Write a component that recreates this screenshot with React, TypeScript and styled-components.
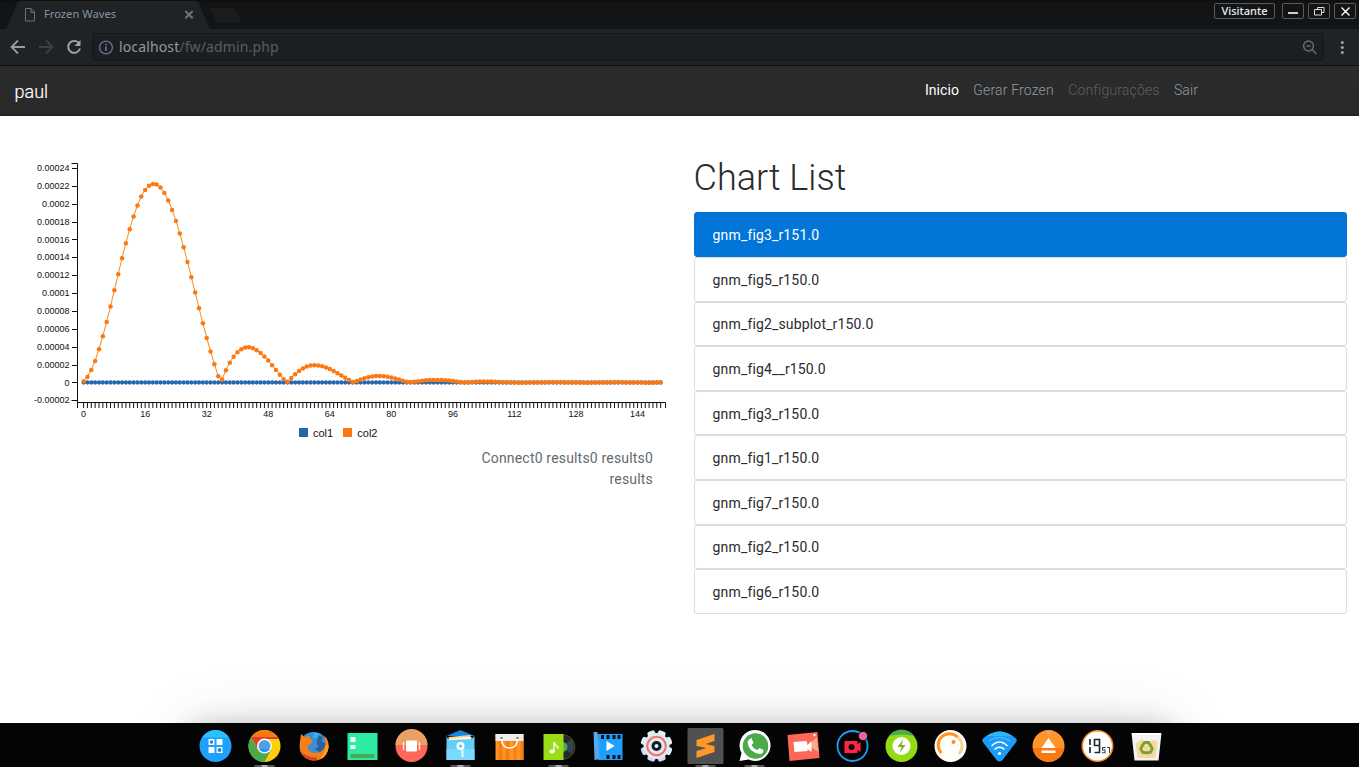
import React from 'react';
import styled, { createGlobalStyle } from 'styled-components';

const Global = createGlobalStyle`
  * { box-sizing: border-box; }
  body { margin: 0; background: #fff; font-family: Roboto, sans-serif; }
`;

const Screen = styled.div`
  width: 1359px;
  height: 767px;
  display: flex;
  flex-direction: column;
  overflow: hidden;
`;

/* ---------- browser chrome ---------- */
const TabStrip = styled.div`
  height: 29px;
  flex: none;
  display: flex;
  justify-content: space-between;
  background: linear-gradient(#0d0e0f 0, #131415 3px, #131416 100%);
`;
const Tabs = styled.div`
  display: flex;
  position: relative;
`;
const TabShape = styled.svg`
  position: absolute;
  left: 0;
  top: 0;
`;
const TabLabel = styled.div`
  position: relative;
  display: flex;
  align-items: center;
  height: 28px;
  padding-left: 24px;
  font: 11px/14px 'Noto Sans', sans-serif;
  color: #8393a4;
`;
const TabTitle = styled.span`
  width: 140px;
  margin-left: 8px;
  font-size: 11.2px;
`;
const WindowControls = styled.div`
  display: flex;
  gap: 4px;
  padding: 3px 3px 0 0;
`;
const ControlButton = styled.div<{ $wide?: boolean }>`
  display: flex;
  align-items: center;
  justify-content: center;
  width: ${p => (p.$wide ? 61 : 22)}px;
  margin-right: ${p => (p.$wide ? 3 : 0)}px;
  height: 16px;
  border: 1px solid #5a5b5c;
  border-radius: 2px;
  color: #eee;
  font: 500 11px/14px 'Noto Sans', sans-serif;
`;
const Toolbar = styled.div`
  height: 37px;
  flex: none;
  display: flex;
  align-items: center;
  background: #202325;
  border-bottom: 1px solid #101112;
  padding-left: 10px;
`;
const NavIcons = styled.div`
  display: flex;
  gap: 12px;
  width: 82px;
`;
const Address = styled.div`
  width: 1232px;
  height: 28px;
  display: flex;
  align-items: center;
  padding: 0 6px;
  background: #1b1f21;
  border: 1px solid #141618;
  border-radius: 3px;
`;
const Url = styled.div`
  flex: 1;
  margin-left: 5px;
  font: 14px/20px 'Noto Sans', sans-serif;
  letter-spacing: 0.13px;
  color: #5c5d61;
  b { font-weight: 400; color: #93989d; }
`;
const MenuDots = styled.svg`
  margin-left: 10px;
`;

/* ---------- page ---------- */
const Navbar = styled.nav`
  height: 50px;
  flex: none;
  display: flex;
  background: linear-gradient(#2b2b2c, #2a2a2b 46px, #252122 50px);
  padding-left: 14.6px;
`;
const Brand = styled.div`
  width: 910.4px;
  font-size: 18px;
  line-height: 51px;
  color: #fff;
  font-weight: 300;
  -webkit-text-stroke: 0.2px #fff;
`;
const NavLinks = styled.div`
  display: flex;
  gap: 14.3px;
  font-size: 14px;
  line-height: 48px;
`;
const NavLink = styled.span<{ $color: string; $strong?: boolean }>`
  color: ${p => p.$color};
  font-weight: ${p => (p.$strong ? 400 : 300)};
  letter-spacing: ${p => (p.$strong ? 0.05 : 0.17)}px;
`;
const Content = styled.main`
  position: relative;
  flex: 1;
  display: flex;
  background: #fff;
  overflow: hidden;
`;
const DockShadow = styled.div`
  position: absolute;
  left: 190px;
  right: 187px;
  top: 613px;
  height: 60px;
  border-radius: 8px;
  box-shadow: 0 0 28px rgba(0, 0, 0, 0.3), 0 0 70px rgba(0, 0, 0, 0.12);
`;
const ChartColumn = styled.section`
  width: 694px;
  display: flex;
  flex-direction: column;
`;
const Results = styled.p`
  margin: 2px 41px 0 0;
  align-self: flex-end;
  width: 190px;
  text-align: right;
  font-size: 14px;
  line-height: 21px;
  letter-spacing: 0.18px;
  color: #626a6f;
`;
const ListColumn = styled.section`
  width: 653px;
`;
const Title = styled.h1`
  margin: 40px 0 11.3px -0.5px;
  font-size: 36px;
  line-height: 45px;
  font-weight: 300;
  color: #292b2c;
`;
const List = styled.div`
  display: flex;
  flex-direction: column;
`;
const ListItem = styled.div<{ $active?: boolean }>`
  height: 44.63px;
  padding-left: 17.6px;
  border: 1px solid ${p => (p.$active ? '#0275d8' : '#dcdcdc')};
  border-radius: 3px;
  background: ${p => (p.$active ? '#0275d8' : '#fff')};
  color: ${p => (p.$active ? '#fff' : '#292b2c')};
  font-size: 14px;
  line-height: 44px;
  letter-spacing: 0.15px;
`;
const ItemLabel = styled.div`
  margin-top: -0.25px;
`;

/* ---------- dock ---------- */
const Dock = styled.div`
  height: 44px;
  flex: none;
  display: flex;
  padding-left: 190.5px;
  background: #040404;
`;
const DockIcon = styled.svg`
  width: 49.02px;
  height: 44px;
  flex: none;
`;

const ys = [
  381, 376.7, 369.7, 360.7, 349, 336, 321.7, 306.3, 290, 274, 258, 243, 229, 216.3, 205.3, 196.3, 189.7, 185.5,
  183.7, 184.4, 187.4, 192.7, 200.2, 209.7, 220.7, 233.3, 247, 261.7, 277, 292.4, 308, 323, 337.7, 351.4, 364,
  376, 379.3, 370, 362.5, 356.5, 352, 349, 347.4, 347, 348, 350, 352.8, 356.2, 360.3, 365, 369.7, 374.5, 379,
  381.5, 377.7, 374, 370.8, 368.2, 366.4, 365.4, 365, 365.2, 366, 367.2, 368.8, 370.7, 373, 375.2, 377.5,
  379.8, 381.7, 380.7, 379.3, 378, 377, 376.3, 375.9, 375.8, 376, 376.5, 377.2, 378.2, 379.4, 380.5, 381.5,
  381.9, 381.6, 381, 380.5, 380.1, 379.9, 379.7, 379.7, 379.8, 380, 380.4, 380.9, 381.4, 381.9, 382.3, 382.2,
  381.9, 381.6, 381.4, 381.2, 381.2, 381.3, 381.5, 381.7, 382, 382.2, 382.3,
];
const STEP = 3.847;
const points = Array.from({ length: 151 }, (_, i) => ({
  x: 83.6 + i * STEP,
  y: ys[i] ?? 382.3 + Math.cos(i / 2.6) * 0.15,
}));
const yLabels = [
  '0.00024', '0.00022', '0.0002', '0.00018', '0.00016', '0.00014', '0.00012', '0.0001', '0.00008', '0.00006',
  '0.00004', '0.00002', '0', '-0.00002',
];

function Chart() {
  return (
    <svg width="694" height="330" viewBox="0 116 694 330" fontFamily="'Liberation Sans', sans-serif" fill="#111">
      <path d="M71.5 163.5H77.5V402.5M71.5 400.5H77.5M77.5 408V402.5H665.5V408" fill="none" stroke="#111" />
      {yLabels.map((t, i) => {
        const y = 168 + i * 17.87;
        return (
          <g key={t}>
            <line x1="72" x2="77" y1={Math.round(y) + 0.5} y2={Math.round(y) + 0.5} stroke="#111" />
            <text x="69.5" y={y + 3.1} fontSize="9" textAnchor="end">{t}</text>
          </g>
        );
      })}
      {points.map((p, i) => (
        <line key={i} x1={p.x} x2={p.x} y1="403" y2="408" stroke="#111" />
      ))}
      {[0, 16, 32, 48, 64, 80, 96, 112, 128, 144].map(n => (
        <text key={n} x={83.6 + n * STEP} y="417" fontSize="9" textAnchor="middle">{n}</text>
      ))}
      <path d={`M83.6 382.5H${points[150].x}`} stroke="#1f77b4" />
      {points.map((p, i) => (
        <circle key={i} cx={p.x} cy="382.5" r="2.15" fill="#2368ae" />
      ))}
      <polyline points={points.map(p => `${p.x},${p.y}`).join(' ')} fill="none" stroke="#f28a25" />
      {points.map((p, i) => (
        <circle key={i} cx={p.x} cy={p.y + 0.2} r="2.25" fill="#fb7812" />
      ))}
      <rect x="299" y="428" width="9" height="9" fill="#2368ae" />
      <text x="313" y="437" fontSize="11">col1</text>
      <rect x="343" y="428" width="9" height="9" fill="#fb7812" />
      <text x="357.3" y="437" fontSize="11">col2</text>
    </svg>
  );
}

const gearTeeth = [0, 45, 90, 135, 180, 225, 270, 315];

const dockIcons: { running?: boolean; art: React.ReactNode }[] = [
  {
    art: (
      <>
        <circle r="16" fill="#1ea0fb" />
        <path d="M-13.5-8.5A16 16 0 0 1 13.5-8.5Z" fill="#2cc0fc" />
        <path d="M-7-7h6v6h-6zM1-7h6v6H1zM-7 1h6v6h-6zM1 1h6v6H1z" fill="#f5fbff" />
        <circle cx="-4" cy="-4" r="1.7" fill="#1787d6" />
        <circle cx="4" cy="4" r="1.9" fill="#1787d6" />
      </>
    ),
  },
  {
    running: true,
    art: (
      <>
        <circle r="16" fill="#ffcf0b" />
        <path d="M-13.2-9A16 16 0 0 1 13.2-9L0-7Z" fill="#fb7813" />
        <path d="M-13.2-9H13.4L14.4-7H0L-7 3Z" fill="#e33b2c" />
        <path d="M-13.2-9A16 16 0 0 0 0 16L7 3-7 3Z" fill="#4caa4c" />
        <circle r="7.5" fill="#fff" />
        <circle r="6" fill="#559fe0" />
        <path d="M-5.2 3H5.2A6 6 0 0 1-5.2 3Z" fill="#1e96fa" />
      </>
    ),
  },
  {
    art: (
      <>
        <circle cx="0" cy="0" r="14" fill="#3d8fd2" />
        <path d="M1-13.5 8-12 5-9-1-8Z" fill="#35b2f5" />
        <path d="M5-11 9-9 8-5 12-2 11 4 6 6 1 3 5 1 3-3Z" fill="#27649d" />
        <path d="M-12.5-12-9-9-4-10-4-8-1-5-3-2-6 0Q-6 6 1 7Q9 8 12-1Q12-8 10-11Q16-6 15 2Q13 14 1 14.5Q-11 14-13.5 4Q-14-5-12.5-12Z" fill="#fa7e17" />
        <path d="M-12 6Q-5 12 2 11L4 14Q-7 17-12 6Z" fill="#d9441c" />
        <path d="M12-1Q16-2 15 2Q13 11 6 13Q12 7 12-1Z" fill="#ffa02c" />
      </>
    ),
  },
  {
    art: (
      <>
        <path d="M-15-13H15V14H-15Z" fill="#2eeba3" />
        <path d="M-12-9h5v5h-5zM-12-1h5v4h-5z" fill="#e9fff7" />
        <path d="M-12 8H12V12H-12Z" fill="#48aa55" />
      </>
    ),
  },
  {
    art: (
      <>
        <circle r="16" fill="#ff6759" />
        <path d="M-16-1A16 16 0 0 1 16-1Z" fill="#eba065" />
        <rect x="-5.5" y="-5.5" width="11" height="11" rx="1" fill="#fff" />
        <path d="M-8-4V4M8-4V4" stroke="#ffe4d8" strokeWidth="1.5" />
      </>
    ),
  },
  {
    running: true,
    art: (
      <>
        <path d="M-14-10 0-16 14-10Z" fill="#1388df" />
        <path d="M-12-9 10-11V0H-12Z" fill="#ffd78c" />
        <path d="M-12-7 11-9V0H-12Z" fill="#fff" />
        <path d="M-14-10V14H14V-10L11-7-12-6Z" fill="#66cff8" />
        <path d="M-14 3H14V14H-14Z" fill="#79daff" />
        <circle cy="0" r="4" fill="#fff" />
        <circle cy="0" r="1.5" fill="#54b9e9" />
        <path d="M1 4V11H3V4Z" fill="#e8fbff" />
      </>
    ),
  },
  {
    art: (
      <>
        <path d="M-14-12H14V14H-14Z" fill="#ff9523" />
        <path d="M-11-5h4V14h-4zM-4-5H0V14h-4zM4-5H7V14H4zM11-5h3V14h-3z" fill="#f77d15" />
        <path d="M-14-12H14V-5H-14Z" fill="#ececec" />
        <path d="M-8-8Q-8 2 0 2T8-8" fill="none" stroke="#fff" strokeWidth="1.5" />
        <path d="M-9-9h2v2h-2zM7-9h2v2H7z" fill="#777" />
      </>
    ),
  },
  {
    running: true,
    art: (
      <>
        <circle cx="4" cy="1" r="12.5" fill="#23282b" stroke="#43661e" strokeWidth=".7" />
        <path d="M13-7Q17 1 13 8L8 4V-3Z" fill="#354256" />
        <circle cx="4" cy="1" r="5" fill="#4caa4c" />
        <path d="M-15-12H5V14H-15Z" fill="#99dd17" />
        <path d="M-4.5 6V-4Q-3 0-.5 1V3" fill="none" stroke="#fff" strokeWidth="1.3" />
        <ellipse cx="-6.5" cy="5.5" rx="2.7" ry="2" fill="#fff" />
      </>
    ),
  },
  {
    art: (
      <>
        <path d="M-10-12H15V14H-10Z" fill="#1e9ffb" />
        <path d="M-6.5-11h3v4h-3zM-1-11h3v4h-3zM5-11h3v4H5zM10-11h3v4h-3zM-1 9h3v4h-3zM5 9h3v4H5zM10 9h3v4h-3z" fill="#10131a" />
        <path d="M-14-14-10-14-8 12-12 14H-13Z" fill="#57a8e8" />
        <path d="M-1-5 7 0-1 5Z" fill="#fff" />
      </>
    ),
  },
  {
    art: (
      <>
        {gearTeeth.map(a => (
          <rect key={a} x="-4" y="-16" width="8" height="9" rx="2.5" fill={a > 90 && a < 270 ? '#cedbf1' : '#e2f1f6'} transform={`rotate(${a + 22.5})`} />
        ))}
        <circle r="13" fill="#dcecf5" />
        <circle r="9.3" fill="none" stroke="#ff6c67" strokeWidth="2.1" />
        <circle r="5" fill="#15181c" />
        <circle r="2" fill="#e8f0f6" />
      </>
    ),
  },
  {
    running: true,
    art: (
      <>
        <rect x="-18" y="-18" width="36" height="36" rx="1.5" fill="#505152" />
        <path d="M-9-6 9-12V-5L0-2 9 0V6L-9 12V5L1 2-9 0Z" fill="#ff9827" />
      </>
    ),
  },
  {
    running: true,
    art: (
      <>
        <path d="M-15 15-13 7A15.5 15.5 0 1 1-6 13.5Z" fill="#fff" />
        <circle cx="1" cy="0" r="12.8" fill="#4caa4c" />
        <path d="M-6-6-3-8-1-3-3-1Q-1 3 3 4L5 2 9 4Q9 8 5 8Q-6 6-7-4Z" fill="#fff" />
      </>
    ),
  },
  {
    art: (
      <>
        <path d="M-16-11 14-14 16 12-14 15Z" fill="#ff6759" />
        <path d="M5 0 13-9 15 6Z" fill="#f9a98f" />
        <path d="M-10-4 3-5 4-1 8-5V6L4 3V5L-9 6Z" fill="#fff" />
        <circle cx="11" cy="-11" r="1.2" fill="#fff" />
      </>
    ),
  },
  {
    art: (
      <>
        <circle r="15" fill="none" stroke="#209bf4" strokeWidth="1.8" />
        <circle cx="10.5" cy="-10" r="4.6" fill="#ea649e" stroke="#050505" strokeWidth=".8" />
        <path d="M-8-5H5V-2L8-4V6L5 4V7H-8Z" fill="#ff2545" />
        <circle cx="-1" cy="1" r="3" fill="#070707" />
      </>
    ),
  },
  {
    art: (
      <>
        <circle r="16" fill="#94db16" />
        <path d="M-12.8-10A16 16 0 0 1 12.8-10Q0-13-12.8-10Z" fill="#4caa4c" />
        <circle r="9" fill="#fff" />
        <path d="M2-7-4 1H0L-2 7 4-1H0Z" fill="#76b719" />
      </>
    ),
  },
  {
    art: (
      <>
        <circle r="16" fill="#fffefa" />
        <path d="M-9 7A11 11 0 0 1 7-9" fill="none" stroke="#ff9527" strokeWidth="3" />
        <path d="M7-9A11 11 0 0 1 8 8" fill="none" stroke="#f5d49a" strokeWidth="3" />
        <circle r="8" fill="#fff" stroke="#eee" strokeWidth=".5" />
        <circle cx="3" cy="-4" r="2" fill="#ff8a18" />
      </>
    ),
  },
  {
    art: (
      <>
        <path d="M-17-7Q0-22 17-7Q18-5 16-3L3 14Q0 17-3 14L-16-3Q-18-5-17-7Z" fill="#1b9bfa" />
        <path d="M-13-10Q0-19 13-10Z" fill="#29b6fc" />
        <path d="M-11-5Q0-12 11-5" fill="none" stroke="#55c6ff" />
        <path d="M-8 0Q0-8 8 0M-5 3.5Q0-1 5 3.5" fill="none" stroke="#fff" strokeWidth="1.6" />
        <circle cy="7.5" r="1.6" fill="#fff" />
      </>
    ),
  },
  {
    art: (
      <>
        <circle r="16" fill="#ff9428" />
        <path d="M-15.8 2H15.8A16 16 0 0 1-15.8 2Z" fill="#f87812" />
        <path d="M-4-15.5H4L0-9Z" fill="#eba065" />
        <path d="M0-8 7 2H-7ZM-7 4.5H7V7H-7Z" fill="#fff" />
      </>
    ),
  },
  {
    art: (
      <>
        <circle r="15.2" fill="#fff" stroke="#f28b24" strokeWidth="1.6" />
        <path d="M-7.5-7V-1M-7.5 1V7" fill="none" stroke="#182a36" strokeWidth="1.7" />
        <path d="M2-.5V-6.5H-3V-.5H2V6.5H-3" fill="none" stroke="#182a36" strokeWidth="1.6" />
        <path d="M8 1.5H5V4H7.5V6.8H4.5M9.5 1.5H12V7" fill="none" stroke="#344655" strokeWidth="1.1" />
      </>
    ),
  },
  {
    art: (
      <>
        <path d="M-15-13H15L12 14.5H-12Z" fill="#f3f3f2" />
        <path d="M-11-3-8-4-5-7-1-3 5-5 8-6 11-4 9 12H-9Z" fill="#f3d9a3" />
        <path d="M-14-12H14" stroke="#fff" strokeWidth="2" />
        <g fill="none" stroke="#7f9f2c" strokeWidth="2.8">
          <path d="M-4.5 0-2-3.5H2L4.5 0" />
          <path d="M-4.5 0-2-3.5H2L4.5 0" transform="rotate(120 0 2)" />
          <path d="M-4.5 0-2-3.5H2L4.5 0" transform="rotate(240 0 2)" />
        </g>
      </>
    ),
  },
];

const charts = [
  'gnm_fig3_r151.0',
  'gnm_fig5_r150.0',
  'gnm_fig2_subplot_r150.0',
  'gnm_fig4__r150.0',
  'gnm_fig3_r150.0',
  'gnm_fig1_r150.0',
  'gnm_fig7_r150.0',
  'gnm_fig2_r150.0',
  'gnm_fig6_r150.0',
];

export default function App() {
  return (
    <Screen>
      <Global />
      <TabStrip>
        <Tabs>
          <TabShape width="250" height="29">
            <path d="M6 29 17 4Q18 1 21 1H195Q198 1 199 4L210 29Z" fill="#202325" />
            <path d="M210 8H235L242 23H217Z" fill="#1a1c1d" />
          </TabShape>
          <TabLabel>
            <svg width="12" height="15" viewBox="0 0 12 15" fill="none" stroke="#6d6f70">
              <path d="M1.5 1.5H7L10.5 5V14H1.5ZM7 1.5V5.5H10.5" />
            </svg>
            <TabTitle>Frozen Waves</TabTitle>
            <svg width="10" height="10" viewBox="0 0 10 10" stroke="#717375" strokeWidth="2">
              <path d="M1.3 2 8.7 9.3M8.7 2 1.3 9.3" />
            </svg>
          </TabLabel>
        </Tabs>
        <WindowControls>
          <ControlButton $wide>Visitante</ControlButton>
          <ControlButton>
            <svg width="10" height="10"><path d="M0 7H10" stroke="#fff" strokeWidth="1.6" /></svg>
          </ControlButton>
          <ControlButton>
            <svg width="11" height="9" fill="none" stroke="#ddd"><path d="M3.5 2V.5H10V5.5H8M.5 2.5H7.5V8H.5Z" /></svg>
          </ControlButton>
          <ControlButton>
            <svg width="9" height="9" stroke="#fff" strokeWidth="1.4"><path d="M.5.5 8.5 8.5M8.5.5.5 8.5" /></svg>
          </ControlButton>
        </WindowControls>
      </TabStrip>
      <Toolbar>
        <NavIcons>
          <svg width="16" height="16" fill="none" stroke="#8e9db0" strokeWidth="1.8"><path d="M15 8H2M8 1.5 1.5 8 8 14.5" /></svg>
          <svg width="16" height="16" fill="none" stroke="#3e4142" strokeWidth="1.8"><path d="M1 8H14M8 1.5 14.5 8 8 14.5" /></svg>
          <svg width="16" height="16" fill="none" stroke="#a5a6a6" strokeWidth="1.9"><path d="M13 4.2A6 6 0 1 0 14 9.5" /><path d="M14.5 1V7H8.5Z" fill="#a5a6a6" stroke="none" /></svg>
        </NavIcons>
        <Address>
          <svg width="15" height="15" fill="none" stroke="#65738a" strokeWidth="1.4"><circle cx="7" cy="7.5" r="6.4" /><path d="M7 6.5V11M7 3.7V5.3" strokeWidth="1.7" /></svg>
          <Url><b>localhost</b>/fw/admin.php</Url>
          <svg width="15" height="15" fill="none" stroke="#656d76" strokeWidth="1.5"><circle cx="6.5" cy="6" r="4.9" /><path d="M10 9.5 14.5 14M4.5 6H8.5" /></svg>
        </Address>
        <MenuDots width="16" height="16" fill="#a0a4a7"><circle cx="8.3" cy="3.5" r="1.5" /><circle cx="8.3" cy="8.5" r="1.5" /><circle cx="8.3" cy="13.5" r="1.5" /></MenuDots>
      </Toolbar>
      <Navbar>
        <Brand>paul</Brand>
        <NavLinks>
          <NavLink $color="#fff" $strong>Inicio</NavLink>
          <NavLink $color="#8d9aa0">Gerar Frozen</NavLink>
          <NavLink $color="#645d5d">Configurações</NavLink>
          <NavLink $color="#8d9aa0">Sair</NavLink>
        </NavLinks>
      </Navbar>
      <Content>
        <DockShadow />
        <ChartColumn>
          <Chart />
          <Results>Connect0 results0 results0 results</Results>
        </ChartColumn>
        <ListColumn>
          <Title>Chart List</Title>
          <List>
            {charts.map((name, i) => (
              <ListItem key={name} $active={i === 0}>
                <ItemLabel>{name}</ItemLabel>
              </ListItem>
            ))}
          </List>
        </ListColumn>
      </Content>
      <Dock>
        {dockIcons.map((icon, i) => (
          <DockIcon key={i} viewBox="-24.5 -23 49 44">
            {icon.art}
            {icon.running && (
              <>
                <rect x="-10" y="19" width="20" height="2" fill="#555" />
                <rect x="-3" y="19" width="6" height="2" fill="#aaa" />
              </>
            )}
          </DockIcon>
        ))}
      </Dock>
    </Screen>
  );
}
